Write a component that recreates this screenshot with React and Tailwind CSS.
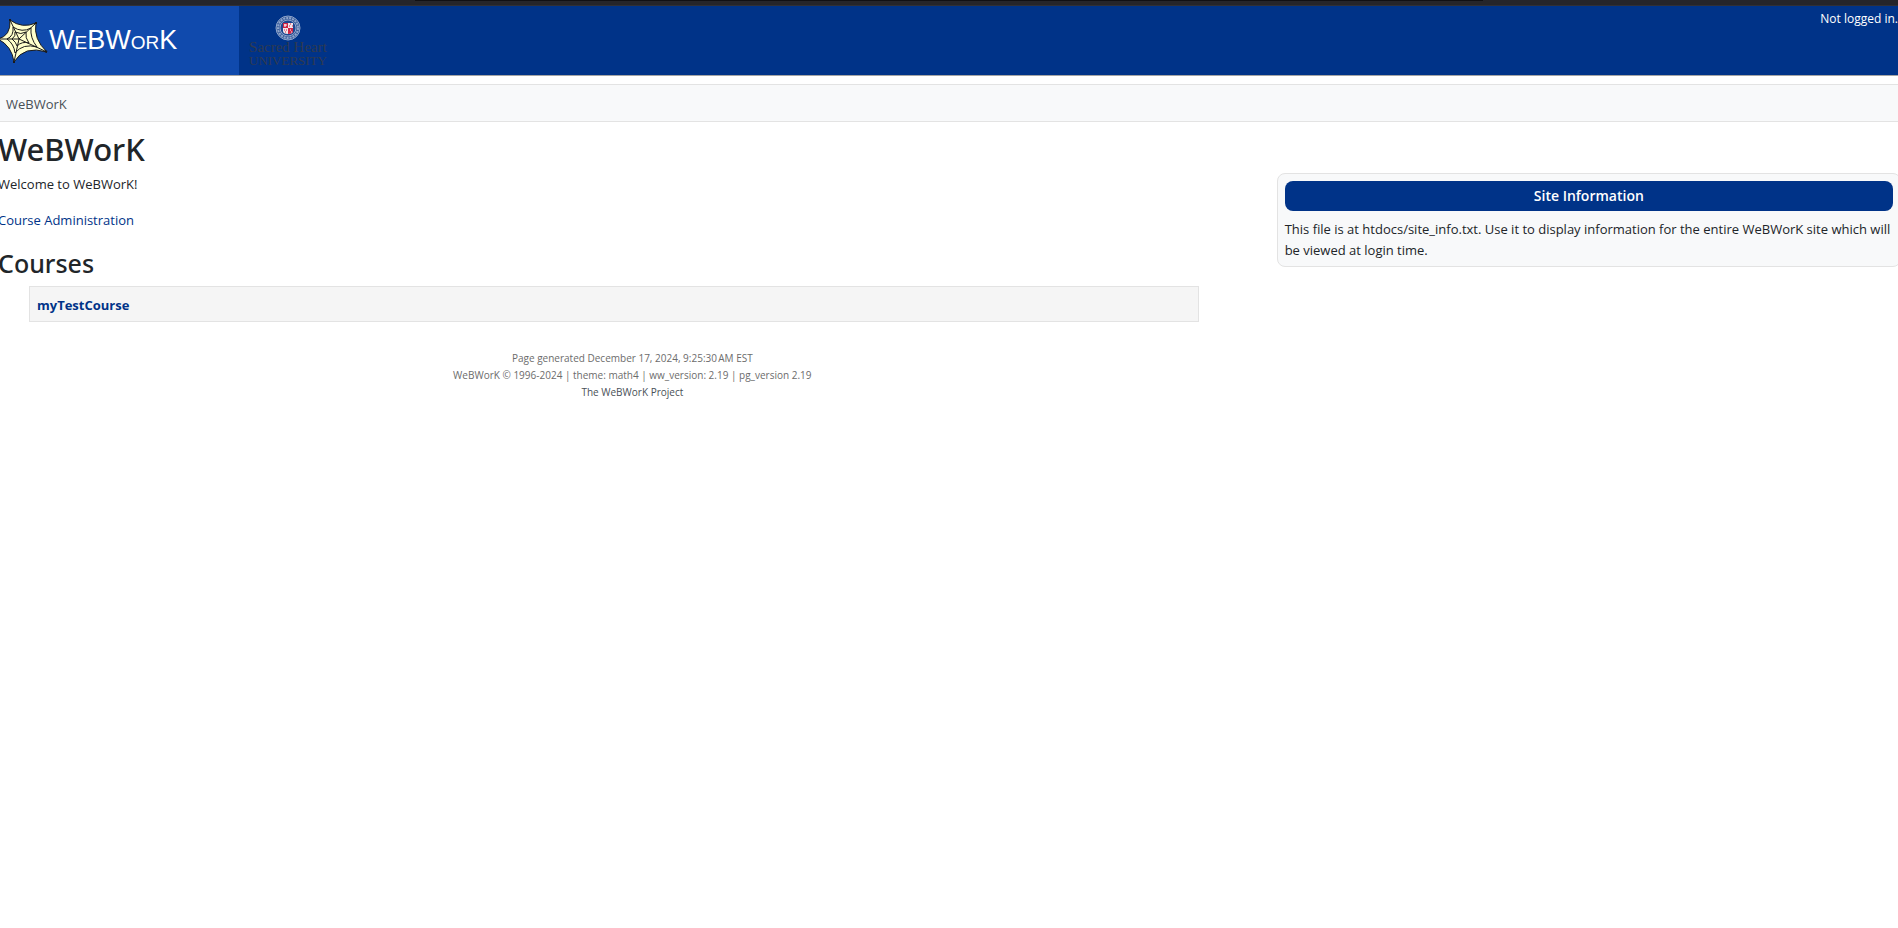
import React from 'react';

const courses = [{ id: 'myTestCourse', name: 'myTestCourse' }];

function WebLogo() {
  return (
    <svg width="52" height="50" viewBox="0 0 52 50" fill="none" stroke="#1a1a1a" aria-hidden="true">
      <path
        d="M13 5Q25 14 39 8Q36 24 50 37Q27 30 17 47Q15 31 1 24Q14 21 13 5Z"
        fill="#ffffcc"
        strokeWidth="1"
      />
      <path d="M22 24L13 5M22 24L39 8M22 24L50 37M22 24L17 47M22 24L1 24" strokeWidth="1" />
      <path d="M16 12Q25 18 34 13Q33 23 40 32Q26 28 18 38Q17 29 10 24Q17 21 16 12Z" strokeWidth="1" />
      <path d="M18 17Q24 20 29 17Q28 23 32 28Q25 26 20 31Q19 27 15 24Q19 21 18 17Z" strokeWidth="1" />
      <path d="M12 5h2M38 8h2M48 36l2 1M16 47h2" strokeWidth="2" />
    </svg>
  );
}

function SchoolSeal() {
  return (
    <svg width="26" height="26" viewBox="0 0 26 26" aria-hidden="true">
      <circle cx="13" cy="13" r="12" fill="#3a5d9c" stroke="#8fa5cb" strokeWidth="1" />
      <circle cx="13" cy="13" r="10" fill="none" stroke="#8fa5cb" strokeWidth="2" strokeDasharray="2 1" />
      <circle cx="13" cy="13" r="8" fill="#1c4690" stroke="#8fa5cb" strokeWidth="1" />
      <path d="M8 8h10v8q0 3-5 3q-5 0-5-3z" fill="#f1e4ea" />
      <path d="M8 8h5v5H8zM13 13h5v3q0 3-5 3z" fill="#cf2445" />
      <path d="M10 9v3M9 10h3" stroke="#fff" strokeWidth="1" />
      <path d="M15 9h1M17 11h1M14 11h1M9 15h1M11 15h1M10 17h1" stroke="#cf2445" strokeWidth="1" />
      <path d="M15 15h1M16 17h1" stroke="#fff" strokeWidth="1" />
    </svg>
  );
}

function Masthead() {
  return (
    <header className="flex h-[70px] border-b border-[#a5a5a5] bg-[#003388]">
      <a href="#home" className="flex w-[239px] items-center bg-[#104aad] pb-0.5">
        <span className="-ml-[3px] shrink-0">
          <WebLogo />
        </span>
        <span className="font-['Liberation_Sans',sans-serif] text-[27px] leading-8 text-white [font-variant-caps:small-caps]">
          WeBWorK
        </span>
      </a>
      <a
        href="#school"
        className="ml-2.5 flex flex-col items-center pt-[9px] font-['Liberation_Serif',serif] text-[15px] leading-[13px] text-[#2f3a50]"
      >
        <SchoolSeal />
        <span>Sacred Heart</span>
        <span className="text-[13px] leading-[13px]">UNIVERSITY</span>
      </a>
      <div className="ml-auto pt-1 text-xs leading-[18px] text-white">Not logged in.</div>
    </header>
  );
}

function SiteInfo() {
  return (
    <aside className="mt-[51px] rounded-lg border border-[#e3e3e3] bg-[#f8f9fa] px-[7px] pt-[7px] pb-[5px]">
      <h2 className="mb-2 rounded-lg bg-[#003388] text-center text-sm leading-[30px] font-semibold text-white">
        Site Information
      </h2>
      <p>
        This file is at htdocs/site_info.txt. Use it to display information for the entire WeBWorK site which
        will be viewed at login time.
      </p>
    </aside>
  );
}

export default function App() {
  return (
    <div className="min-h-screen overflow-x-hidden bg-white font-['Open_Sans',sans-serif] text-[13px] leading-[21px] text-[#212529]">
      <div className="h-1.5 border-b border-[#303036] bg-[#25252a]">
        <div className="mx-[415px] h-px bg-[#101014]" />
      </div>

      <Masthead />

      <nav
        aria-label="breadcrumb"
        className="mt-2 border-y border-[#e3e3e3] bg-[#f8f9fa] px-1.5 pt-2 pb-1.5 leading-[22px] text-[#495057]"
      >
        WeBWorK
      </nav>

      <div className="-mr-[3px] -ml-0.5 flex">
        <main className="w-2/3">
          <h1 className="mt-2 mb-1.5 font-['Noto_Sans',sans-serif] text-[31px] leading-[38px] font-medium">WeBWorK</h1>
          <p>Welcome to WeBWorK!</p>
          <p className="mt-[15px]">
            <a href="#admin" className="text-[#003388]">Course Administration</a>
          </p>
          <h2 className="mt-4 mb-[7px] font-['Noto_Sans',sans-serif] text-[25px] leading-8 font-medium">Courses</h2>
          <ul className="mr-17 ml-[31px]">
            {courses.map((course) => (
              <li key={course.id} className="border border-[#e3e3e3] bg-[#f5f5f5] px-[7px] pt-[7px] pb-[5px] leading-[22px]">
                <a href="#course" className="font-bold text-[#003388]">{course.name}</a>
              </li>
            ))}
          </ul>

          <footer className="mt-7 text-center text-[10px] leading-[17px] text-[#6c6c6c]">
            <div>Page generated December 17, 2024, 9:25:30&#8239;AM EST</div>
            <div>WeBWorK © 1996-2024 | theme: math4 | ww_version: 2.19 | pg_version 2.19</div>
            <a href="#project" className="text-[#495057]">The WeBWorK Project</a>
          </footer>
        </main>

        <div className="w-1/3 pl-2.5">
          <SiteInfo />
        </div>
      </div>
    </div>
  );
}
